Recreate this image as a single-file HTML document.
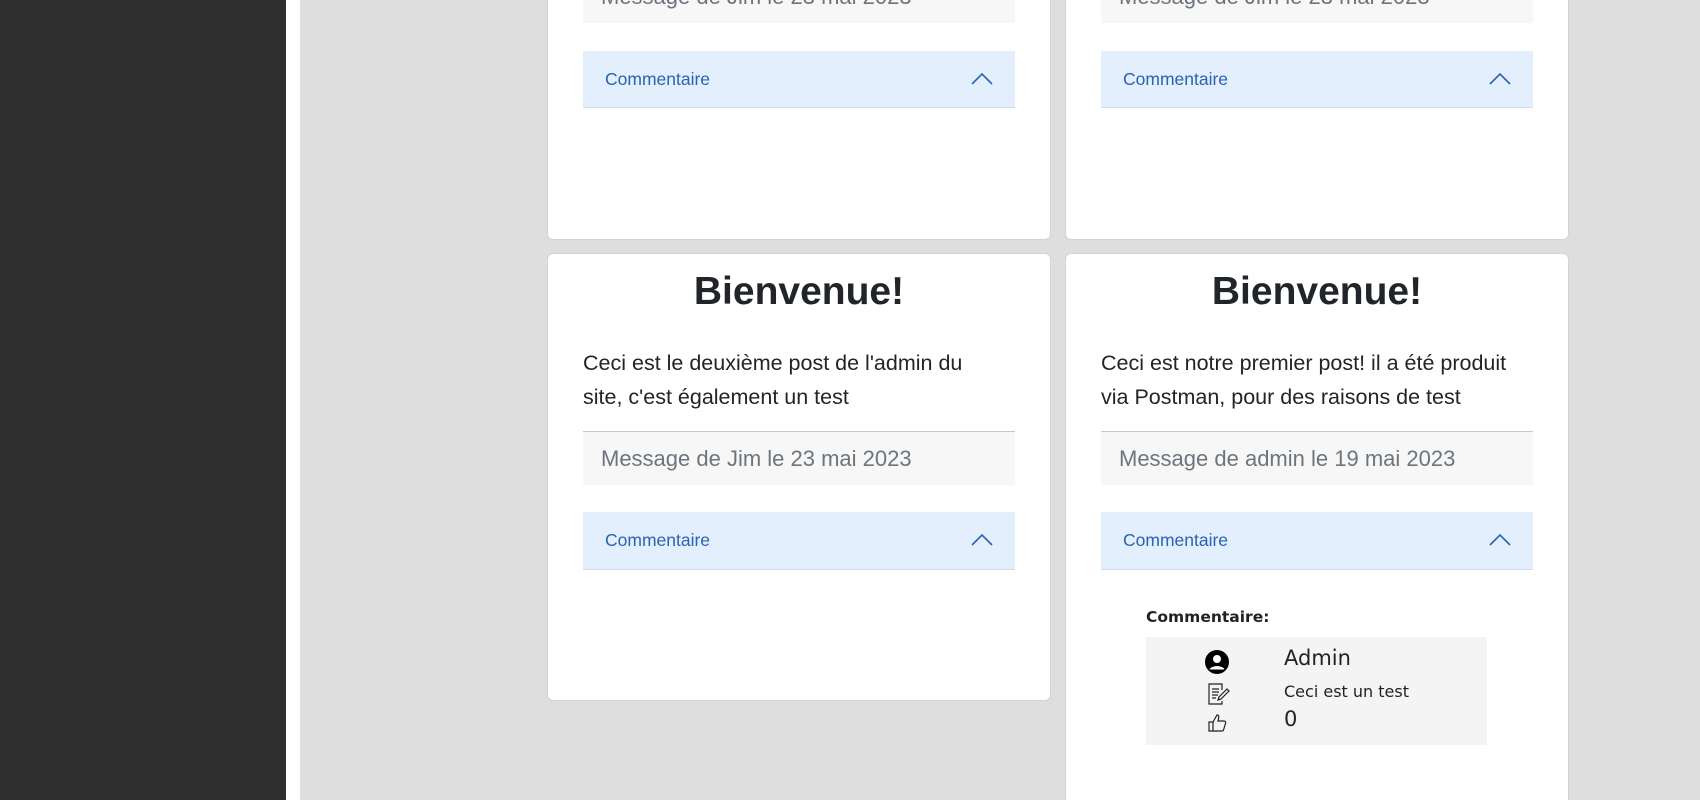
<!DOCTYPE html>
<html><head><meta charset="utf-8"><style>
*{margin:0;padding:0;box-sizing:border-box}
html,body{width:1700px;height:800px;overflow:hidden}
body{background:#dfdede;position:relative;font-family:"Liberation Sans",Arial,sans-serif}
.abs{position:absolute}
.side{left:0;top:0;width:286px;height:800px;background:#2d2e2d}
.strip{left:286px;top:0;width:14px;height:800px;background:#fff}
.card{position:absolute;background:#fff;border:1px solid #d4d4d4;border-radius:6px}
.msg{position:absolute;background:#f7f7f7;border-top:1px solid #c8c8c8;color:#6c757d;font-size:22px;padding-left:18px;display:flex;align-items:center}
.acc{position:absolute;background:#e3effc;border-bottom:1px solid #cfdcec;color:#2a63b0;font-size:17.5px;padding-left:22px;display:flex;align-items:center}
.acc svg{position:absolute;right:22px;top:22px}
h1{position:absolute;font-size:39px;font-weight:bold;color:#212529;text-align:center}
p.t{position:absolute;font-size:21.5px;line-height:34px;color:#212529}
</style></head><body>
<div class="abs side"></div><div class="abs strip"></div>

<div class="card" style="left:547px;top:-20px;width:504px;height:260px"></div>
<div class="card" style="left:1065px;top:-20px;width:504px;height:260px"></div>
<div class="msg" style="left:583px;top:-31px;width:432px;height:54px">Message de Jim le 23 mai 2023</div>
<div class="msg" style="left:1101px;top:-31px;width:432px;height:54px">Message de Jim le 23 mai 2023</div>
<div class="acc" style="left:583px;top:51px;width:432px;height:57px">Commentaire<svg width="22" height="12" viewBox="0 0 22 12"><path d="M1 11L11 1L21 11" fill="none" stroke="#2a63b0" stroke-width="1.6"/></svg></div>
<div class="acc" style="left:1101px;top:51px;width:432px;height:57px">Commentaire<svg width="22" height="12" viewBox="0 0 22 12"><path d="M1 11L11 1L21 11" fill="none" stroke="#2a63b0" stroke-width="1.6"/></svg></div>

<div class="card" style="left:547px;top:253px;width:504px;height:448px"></div>
<div class="card" style="left:1065px;top:253px;width:504px;height:560px;border-bottom:none"></div>

<h1 style="left:547px;top:270px;width:504px">Bienvenue!</h1>
<h1 style="left:1065px;top:270px;width:504px">Bienvenue!</h1>
<p class="t" style="left:583px;top:346px;width:420px">Ceci est le deuxième post de l'admin du site, c'est également un test</p>
<p class="t" style="left:1101px;top:346px;width:420px">Ceci est notre premier post! il a été produit via Postman, pour des raisons de test</p>
<div class="msg" style="left:583px;top:431px;width:432px;height:54px">Message de Jim le 23 mai 2023</div>
<div class="msg" style="left:1101px;top:431px;width:432px;height:54px">Message de admin le 19 mai 2023</div>
<div class="acc" style="left:583px;top:512px;width:432px;height:58px">Commentaire<svg width="22" height="12" viewBox="0 0 22 12"><path d="M1 11L11 1L21 11" fill="none" stroke="#2a63b0" stroke-width="1.6"/></svg></div>
<div class="acc" style="left:1101px;top:512px;width:432px;height:58px">Commentaire<svg width="22" height="12" viewBox="0 0 22 12"><path d="M1 11L11 1L21 11" fill="none" stroke="#2a63b0" stroke-width="1.6"/></svg></div>

<div class="abs" style="left:1146px;top:608px;color:#222;font-family:'DejaVu Sans',sans-serif;font-weight:600;font-size:15.5px">Commentaire:</div>
<div class="abs" style="left:1146px;top:637px;width:341px;height:108px;background:#f5f4f4"></div>
<svg class="abs" style="left:1205px;top:650px" width="24" height="24" viewBox="0 0 24 24"><circle cx="12" cy="12" r="12" fill="#000"/><circle cx="12" cy="9" r="4" fill="#fff"/><path d="M4.5 19.5C6 15 18 15 19.5 19.5" fill="#fff"/></svg>
<svg class="abs" style="left:1206px;top:682px" width="24" height="24" viewBox="0 0 24 24" fill="none" stroke="#222" stroke-width="1.2"><path d="M16 8V2H3v20h13v-3"/><path d="M6 7h7M6 10h7M6 13h6M6 16h4"/><path d="M12 18l1-3 8-8 2 2-8 8z"/></svg>
<svg class="abs" style="left:1208px;top:713px" width="20" height="20" viewBox="0 0 20 20" fill="none" stroke="#222" stroke-width="1.2"><path d="M1 9h4v9H1z"/><path d="M5 9l4-7c2 0 2 2 1.5 4l-.5 2h6c1.5 0 2 1.5 1.5 2.5l-2 6.5c-.3 1-1 1-2 1H5"/></svg>
<div class="abs" style="left:1284px;top:646px;color:#222;font-family:'DejaVu Sans',sans-serif;font-size:21px">Admin</div>
<div class="abs" style="left:1284px;top:682px;font-size:16px;color:#222;font-family:'DejaVu Sans',sans-serif">Ceci est un test</div>
<div class="abs" style="left:1284px;top:707px;font-size:21px;color:#222;font-family:'DejaVu Sans',sans-serif">0</div>
</body></html>
